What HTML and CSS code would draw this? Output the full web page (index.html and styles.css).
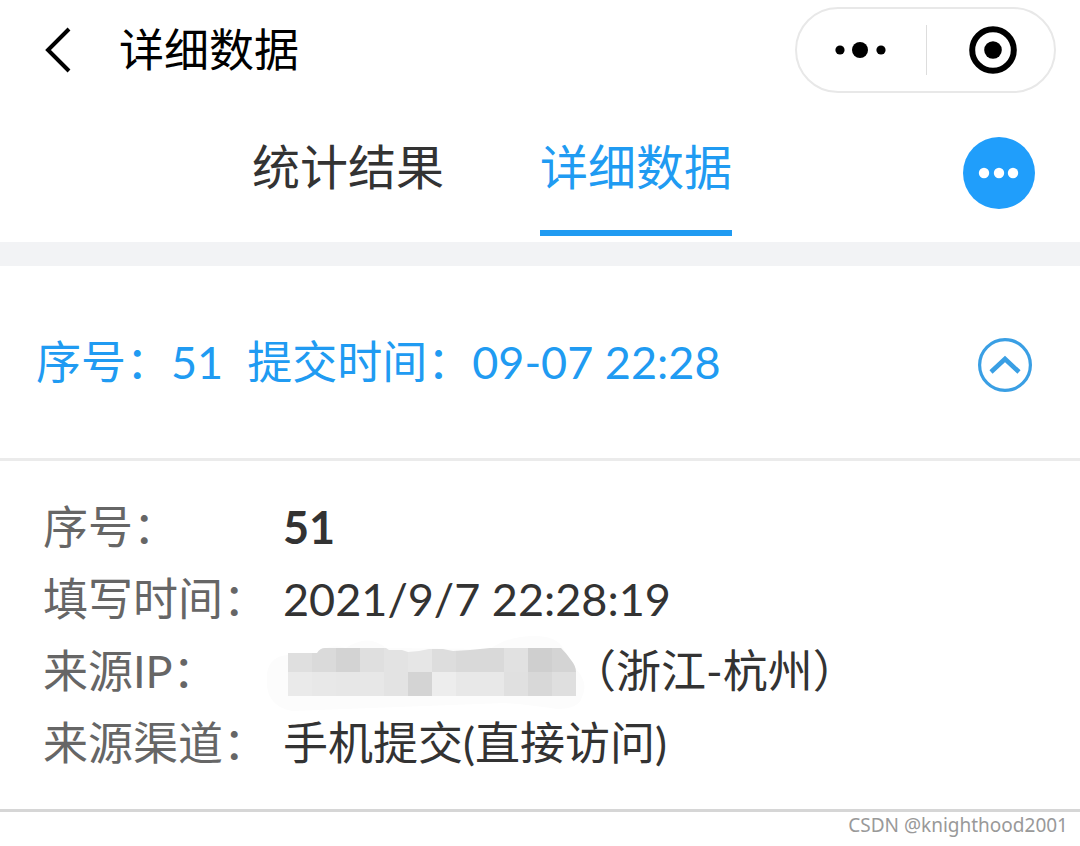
FILE: index.html
```html
<!DOCTYPE html>
<html lang="zh-CN">
<head>
<meta charset="UTF-8">
<meta name="viewport" content="width=device-width, initial-scale=1">
<title>详细数据</title>
<link rel="stylesheet" href="styles.css">
</head>
<body>
    <header class="navbar">
        <button class="icon-button back" type="button" aria-label="返回">
            <svg width="26" height="46" viewBox="0 0 26 46" fill="none" stroke="#000" stroke-width="4">
                <path d="M24 2 L3 23 L24 44"/>
            </svg>
        </button>
        <h1 class="title">详细数据</h1>
        <div class="capsule">
            <button class="icon-button" type="button" aria-label="更多">
                <svg width="52" height="18" viewBox="0 0 52 18">
                    <circle cx="5" cy="9" r="4.6"/>
                    <circle cx="25" cy="9" r="8"/>
                    <circle cx="46" cy="9" r="4.6"/>
                </svg>
            </button>
            <button class="icon-button" type="button" aria-label="关闭">
                <svg width="48" height="48" viewBox="0 0 48 48">
                    <circle cx="24" cy="24" r="20.8" fill="none" stroke="#000" stroke-width="6"/>
                    <circle cx="24" cy="24" r="8.8"/>
                </svg>
            </button>
        </div>
    </header>

    <div class="toolbar">
        <nav class="tabs">
            <a class="tab" href="#stats">统计结果</a>
            <a class="tab active" href="#detail">详细数据</a>
        </nav>
        <button class="icon-button menu" type="button" aria-label="菜单">
            <svg width="72" height="72" viewBox="0 0 72 72">
                <circle cx="36" cy="36" r="36" fill="#209efb"/>
                <g fill="#fff">
                    <circle cx="21" cy="36" r="5.2"/>
                    <circle cx="36" cy="36" r="5.2"/>
                    <circle cx="50" cy="36" r="5.2"/>
                </g>
            </svg>
        </button>
    </div>

    <main id="detail">
        <section class="record">
            <div class="record-head">
                <p class="summary">
                    <span>序号：51</span>
                    <span>提交时间：09-07 22:28</span>
                </p>
                <button class="icon-button toggle" type="button" aria-label="收起" aria-expanded="true">
                    <svg width="54" height="54" viewBox="0 0 54 54" fill="none" stroke="#3a9fe4">
                        <circle cx="27" cy="27" r="25.4" stroke-width="3.2"/>
                        <path d="M13 34 L27 21 L41 34" stroke-width="4.6"/>
                    </svg>
                </button>
            </div>
            <dl class="fields">
                <dt>序号：</dt>
                <dd><strong>51</strong></dd>
                <dt>填写时间：</dt>
                <dd>2021/9/7 22:28:19</dd>
                <dt>来源IP：</dt>
                <dd>
                    <svg class="mosaic" width="288" height="72" viewBox="0 0 288 72" aria-hidden="true">
                        <defs>
                            <clipPath id="smear">
                                <path d="M5 18 H34 Q37 13 42 13 H103 L106 15 H119 L125 17 L136 16 L146 14 H160 L170 16 L187 15 L207 13 H278 Q284 19 288 25 Q293 31 293 37 V61 H5 Z"/>
                            </clipPath>
                        </defs>
                        <path fill="#fcfcfc" d="M-16 38 Q-13 21 5 20 L34 18 Q47 8 63 13 Q85 -2 103 13 L207 14 Q224 2 248 1 Q273 0 280 13 L293 34 Q306 48 299 62 Q296 74 274 74 Q250 70 222 68 Q115 72 9 76 Q-13 72 -16 52 Z"/>
                        <g clip-path="url(#smear)" shape-rendering="crispEdges">
                            <rect x="5" y="13" width="24" height="24" fill="#dfdfdf"/>
                            <rect x="29" y="13" width="24" height="24" fill="#dadada"/>
                            <rect x="53" y="13" width="24" height="24" fill="#d3d3d3"/>
                            <rect x="77" y="13" width="24" height="24" fill="#dfdfdf"/>
                            <rect x="101" y="13" width="24" height="24" fill="#e3e3e3"/>
                            <rect x="125" y="13" width="24" height="24" fill="#e6e6e6"/>
                            <rect x="149" y="13" width="24" height="24" fill="#dddddd"/>
                            <rect x="173" y="13" width="48" height="24" fill="#d9d9d9"/>
                            <rect x="221" y="13" width="24" height="24" fill="#e1e1e1"/>
                            <rect x="245" y="13" width="24" height="24" fill="#cfcfcf"/>
                            <rect x="269" y="13" width="24" height="24" fill="#d4d4d4"/>
                            <rect x="5" y="37" width="24" height="24" fill="#eaeaea"/>
                            <rect x="29" y="37" width="24" height="24" fill="#e8e8e8"/>
                            <rect x="53" y="37" width="48" height="24" fill="#e7e7e7"/>
                            <rect x="101" y="37" width="24" height="24" fill="#e3e3e3"/>
                            <rect x="125" y="37" width="24" height="24" fill="#d4d4d4"/>
                            <rect x="149" y="37" width="24" height="24" fill="#ededed"/>
                            <rect x="173" y="37" width="48" height="24" fill="#e8e8e8"/>
                            <rect x="221" y="37" width="24" height="24" fill="#e0e0e0"/>
                            <rect x="245" y="37" width="24" height="24" fill="#d8d8d8"/>
                            <rect x="269" y="37" width="24" height="24" fill="#dfdfdf"/>
                        </g>
                    </svg>
                    <span>（浙江-杭州）</span>
                </dd>
                <dt>来源渠道：</dt>
                <dd>手机提交(直接访问)</dd>
            </dl>
        </section>
    </main>

    <footer class="credit">CSDN @knighthood2001</footer>
</body>
</html>
```

FILE: styles.css
```css
* {
    box-sizing: border-box;
    margin: 0;
    padding: 0;
}
body {
    background-color: #fff;
    color: #333;
    font-family: Lato, "Noto Sans CJK SC", sans-serif;
    font-size: 45px;
}
svg {
    display: block;
}
.icon-button {
    display: flex;
    align-items: center;
    justify-content: center;
    border: none;
    background: none;
    cursor: pointer;
}

/* top bar */
.navbar {
    display: flex;
    align-items: center;
    height: 100px;
    padding: 0 24px 0 45px;
    color: #000;
}
.back {
    margin-right: 48px;
}
.title {
    flex: 1;
    font-size: 45px;
    font-weight: 400;
    line-height: 72px;
}
.capsule {
    display: flex;
    align-items: center;
    width: 261px;
    height: 86px;
    border: 2px solid #e8e8e8;
    border-radius: 43px;
}
.capsule .icon-button {
    width: 50%;
    height: 50px;
}
.capsule .icon-button + .icon-button {
    border-left: 1px solid #ddd;
    padding-left: 6px;
}

/* tabs */
.toolbar {
    display: flex;
    align-items: center;
    height: 166px;
    padding: 0 45px 0 21px;
    border-bottom: 24px solid #f2f3f5;
}
.tabs {
    display: flex;
    flex: 1;
    justify-content: center;
    gap: 96px;
}
.tab {
    height: 130px;
    border-bottom: 6px solid transparent;
    color: #333;
    font-size: 48px;
    line-height: 122px;
    text-decoration: none;
}
.tab.active {
    border-color: #209bf2;
    color: #209bf2;
}
.menu {
    margin-top: 4px;
}

/* record */
.record {
    border-bottom: 3px solid #d6d6d6;
}
.record-head {
    display: flex;
    align-items: center;
    justify-content: space-between;
    height: 195px;
    padding: 0 48px 0 36px;
    border-bottom: 3px solid #ebebeb;
}
.summary {
    display: flex;
    gap: 24px;
    color: #209bf2;
    line-height: 72px;
}
.toggle {
    margin-top: 6px;
}
.fields {
    display: grid;
    grid-template-columns: 240px 1fr;
    padding: 30px 43px;
    line-height: 72px;
}
.fields dt {
    color: #666;
}
.fields dd {
    display: flex;
}
.mosaic {
    overflow: visible;
}

.credit {
    padding: 0 12px;
    color: #999;
    font-family: "Noto Sans", sans-serif;
    font-size: 19px;
    line-height: 26px;
    text-align: right;
}
```
